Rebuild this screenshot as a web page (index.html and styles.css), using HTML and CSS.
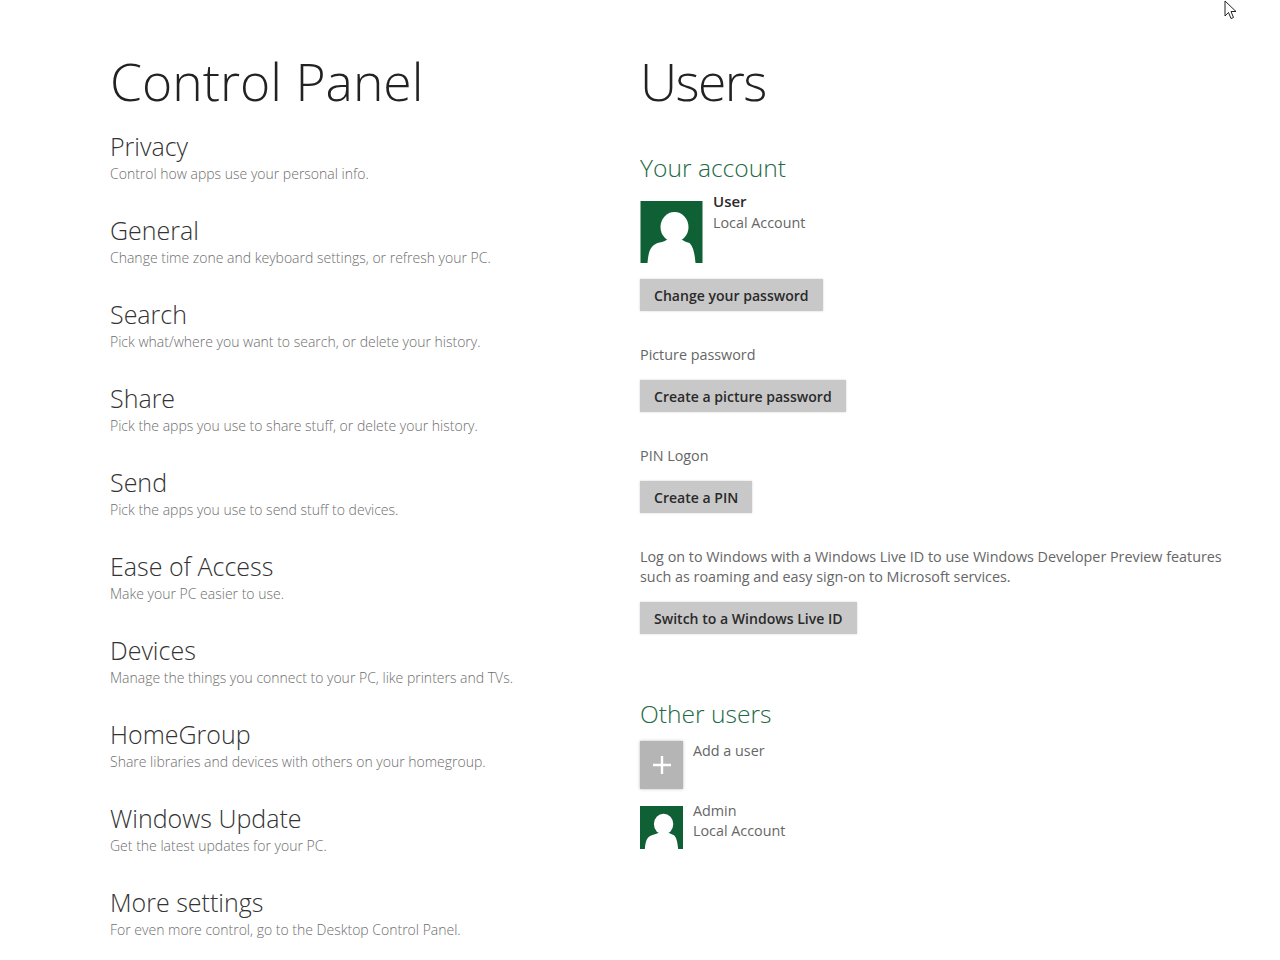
FILE: index.html
```html
<!DOCTYPE html>
<html lang="en">
<head>
<meta charset="utf-8">
<title>Control Panel</title>
<link rel="stylesheet" href="styles.css">
</head>
<body>
<svg class="cursor" width="16" height="21" viewBox="0 0 16 21"><path d="M1 1v15l3.5-3.5 2.5 6 2.5-1-2.5-6h5z" fill="#fff" stroke="#222" stroke-width="1"/></svg>
<main class="page">
  <section class="menu">
    <h1 class="page-title">Control Panel</h1>
    <ul class="menu-list">
      <li class="menu-item"><h2 class="menu-name">Privacy</h2><p class="menu-desc">Control how apps use your personal info.</p></li>
      <li class="menu-item"><h2 class="menu-name">General</h2><p class="menu-desc">Change time zone and keyboard settings, or refresh your PC.</p></li>
      <li class="menu-item"><h2 class="menu-name">Search</h2><p class="menu-desc">Pick what/where you want to search, or delete your history.</p></li>
      <li class="menu-item"><h2 class="menu-name">Share</h2><p class="menu-desc">Pick the apps you use to share stuff, or delete your history.</p></li>
      <li class="menu-item"><h2 class="menu-name">Send</h2><p class="menu-desc">Pick the apps you use to send stuff to devices.</p></li>
      <li class="menu-item"><h2 class="menu-name">Ease of Access</h2><p class="menu-desc">Make your PC easier to use.</p></li>
      <li class="menu-item"><h2 class="menu-name">Devices</h2><p class="menu-desc">Manage the things you connect to your PC, like printers and TVs.</p></li>
      <li class="menu-item"><h2 class="menu-name">HomeGroup</h2><p class="menu-desc">Share libraries and devices with others on your homegroup.</p></li>
      <li class="menu-item"><h2 class="menu-name">Windows Update</h2><p class="menu-desc">Get the latest updates for your PC.</p></li>
      <li class="menu-item"><h2 class="menu-name">More settings</h2><p class="menu-desc">For even more control, go to the Desktop Control Panel.</p></li>
    </ul>
  </section>
  <section class="detail">
    <h1 class="page-title narrow">Users</h1>
    <h2 class="section-title first">Your account</h2>
    <div class="account">
      <svg class="avatar large" viewBox="0 0 62 62"><rect width="62" height="62" fill="#0f6135"/><ellipse cx="34" cy="26" rx="14" ry="15" fill="#fff"/><path d="M7 62C8 50 10 45 17 42C20 41 23 41 26 39L42 39C45 41 47 41 49 42C52 45 54 50 55 62Z" fill="#fff"/></svg>
      <div class="account-text"><div class="account-name">User</div><div class="muted">Local Account</div></div>
    </div>
    <button class="btn first-btn">Change your password</button>
    <p class="muted label">Picture password</p>
    <button class="btn">Create a picture password</button>
    <p class="muted label">PIN Logon</p>
    <button class="btn">Create a PIN</button>
    <p class="muted label">Log on to Windows with a Windows Live ID to use Windows Developer Preview features<br>such as roaming and easy sign-on to Microsoft services.</p>
    <button class="btn">Switch to a Windows Live ID</button>
    <h2 class="section-title other">Other users</h2>
    <div class="user-row">
      <div class="add-tile"><svg width="18" height="18" viewBox="0 0 18 18"><path d="M9 0v18M0 9h18" stroke="#fff" stroke-width="2.4"/></svg></div>
      <div class="muted">Add a user</div>
    </div>
    <div class="user-row admin">
      <svg class="avatar small" viewBox="0 0 62 62"><rect width="62" height="62" fill="#0f6135"/><ellipse cx="34" cy="26" rx="14" ry="15" fill="#fff"/><path d="M7 62C8 50 10 45 17 42C20 41 23 41 26 39L42 39C45 41 47 41 49 42C52 45 54 50 55 62Z" fill="#fff"/></svg>
      <div class="muted admin-text">Admin<br>Local Account</div>
    </div>
  </section>
</main>
</body>
</html>
```
FILE: styles.css
```css
* { box-sizing: border-box; }
html, body { margin: 0; height: 960px; overflow: hidden; background: #fff; }
body { font-family: "Open Sans", "Noto Sans", "Liberation Sans", sans-serif; color: #2a2a2a; }
.page { display: flex; padding: 48px 0 0 110px; }
.menu { width: 530px; flex: none; }
.page-title { margin: 0; font-size: 51.6px; line-height: 66px; font-weight: 300; color: #222; }
.page-title.narrow { letter-spacing: -1.6px; }
.menu-list { list-style: none; margin: 15px 0 0; padding: 0; }
.menu-item { height: 84px; }
.menu-name { margin: 0; font-size: 25px; line-height: 34px; font-weight: 300; color: #333; }
.menu-desc { margin: 2px 0 0; font-size: 14px; line-height: 18px; font-weight: 300; color: #6e6e6e; }
.detail { flex: 1; }
.section-title { margin: 0; font-size: 24.6px; line-height: 36px; font-weight: 300; color: #1e6a45; }
.section-title.first { margin-top: 36px; }
.section-title.other { margin-top: 62px; }
.muted { font-size: 14.35px; line-height: 20px; color: #666; }
.account { display: flex; gap: 10px; margin-top: 6px; }
.avatar { display: block; flex: none; }
.avatar.large { width: 63px; height: 62px; margin-top: 9px; }
.avatar.small { width: 43px; height: 43px; }
.account-text { margin-top: -2px; }
.account-name { font-size: 15px; line-height: 23px; font-weight: 600; color: #2a2a2a; }
.btn { display: block; height: 32px; padding: 1px 14px 0; border: 0; background: #c8c8c8; box-shadow: 0 0 2px #d4d4d4; font: 600 14.05px/31px "Open Sans", "Noto Sans", sans-serif; color: #2a2a2a; }
.first-btn { margin-top: 16px; }
.label { margin: 34px 0 15px; }
.user-row { display: flex; gap: 10px; }
.section-title.other + .user-row { margin-top: 9px; }
.add-tile { width: 43px; height: 48px; background: #b5b5b5; box-shadow: 0 0 3px #bbb; display: flex; align-items: center; justify-content: center; flex: none; }
.user-row.admin { margin-top: 17px; }
.admin-text { margin-top: -5px; }
.cursor { position: absolute; left: 1224px; top: 0; }
```
